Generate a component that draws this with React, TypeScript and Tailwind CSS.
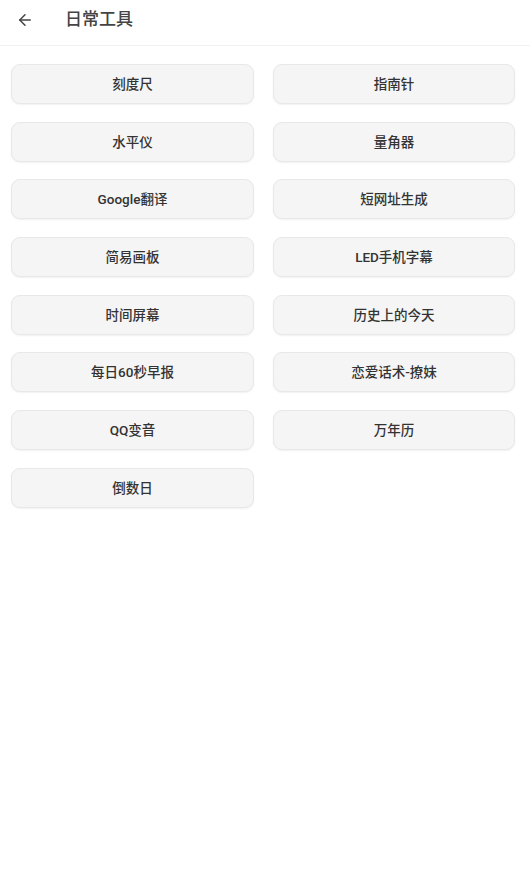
import { ArrowLeft } from 'lucide-react';

const tools: string[] = [
  '刻度尺',
  '指南针',
  '水平仪',
  '量角器',
  'Google翻译',
  '短网址生成',
  '简易画板',
  'LED手机字幕',
  '时间屏幕',
  '历史上的今天',
  '每日60秒早报',
  '恋爱话术-撩妹',
  'QQ变音',
  '万年历',
  '倒数日',
];

export default function App() {
  return (
    <div
      className="min-h-[870px] w-[530px] bg-white text-[#333]"
      style={{ fontFamily: 'Roboto, "Noto Sans CJK SC", sans-serif' }}
    >
      <div className="flex h-[46px] items-center border-b border-[#f2f2f2] pb-[6px]">
        <button className="ml-[16px] flex h-[18px] w-[18px] items-center justify-center text-[#444]">
          <ArrowLeft size={18} strokeWidth={2} />
        </button>
        <h1 className="ml-[31px] text-[17px] font-medium leading-none text-[#444]">日常工具</h1>
      </div>

      <div className="grid grid-cols-[243px_242px] gap-x-[19px] gap-y-[17.7px] pl-[11px] pt-[18px]">
        {tools.map(name => (
          <button
            key={name}
            className="flex h-[40px] items-center justify-center rounded-[9px] border border-[#e8e8e8] bg-[#f5f5f5] text-[13.5px] font-medium text-[#333] shadow-[0_1px_2px_rgba(0,0,0,0.06)]"
          >
            {name}
          </button>
        ))}
      </div>
    </div>
  );
}
